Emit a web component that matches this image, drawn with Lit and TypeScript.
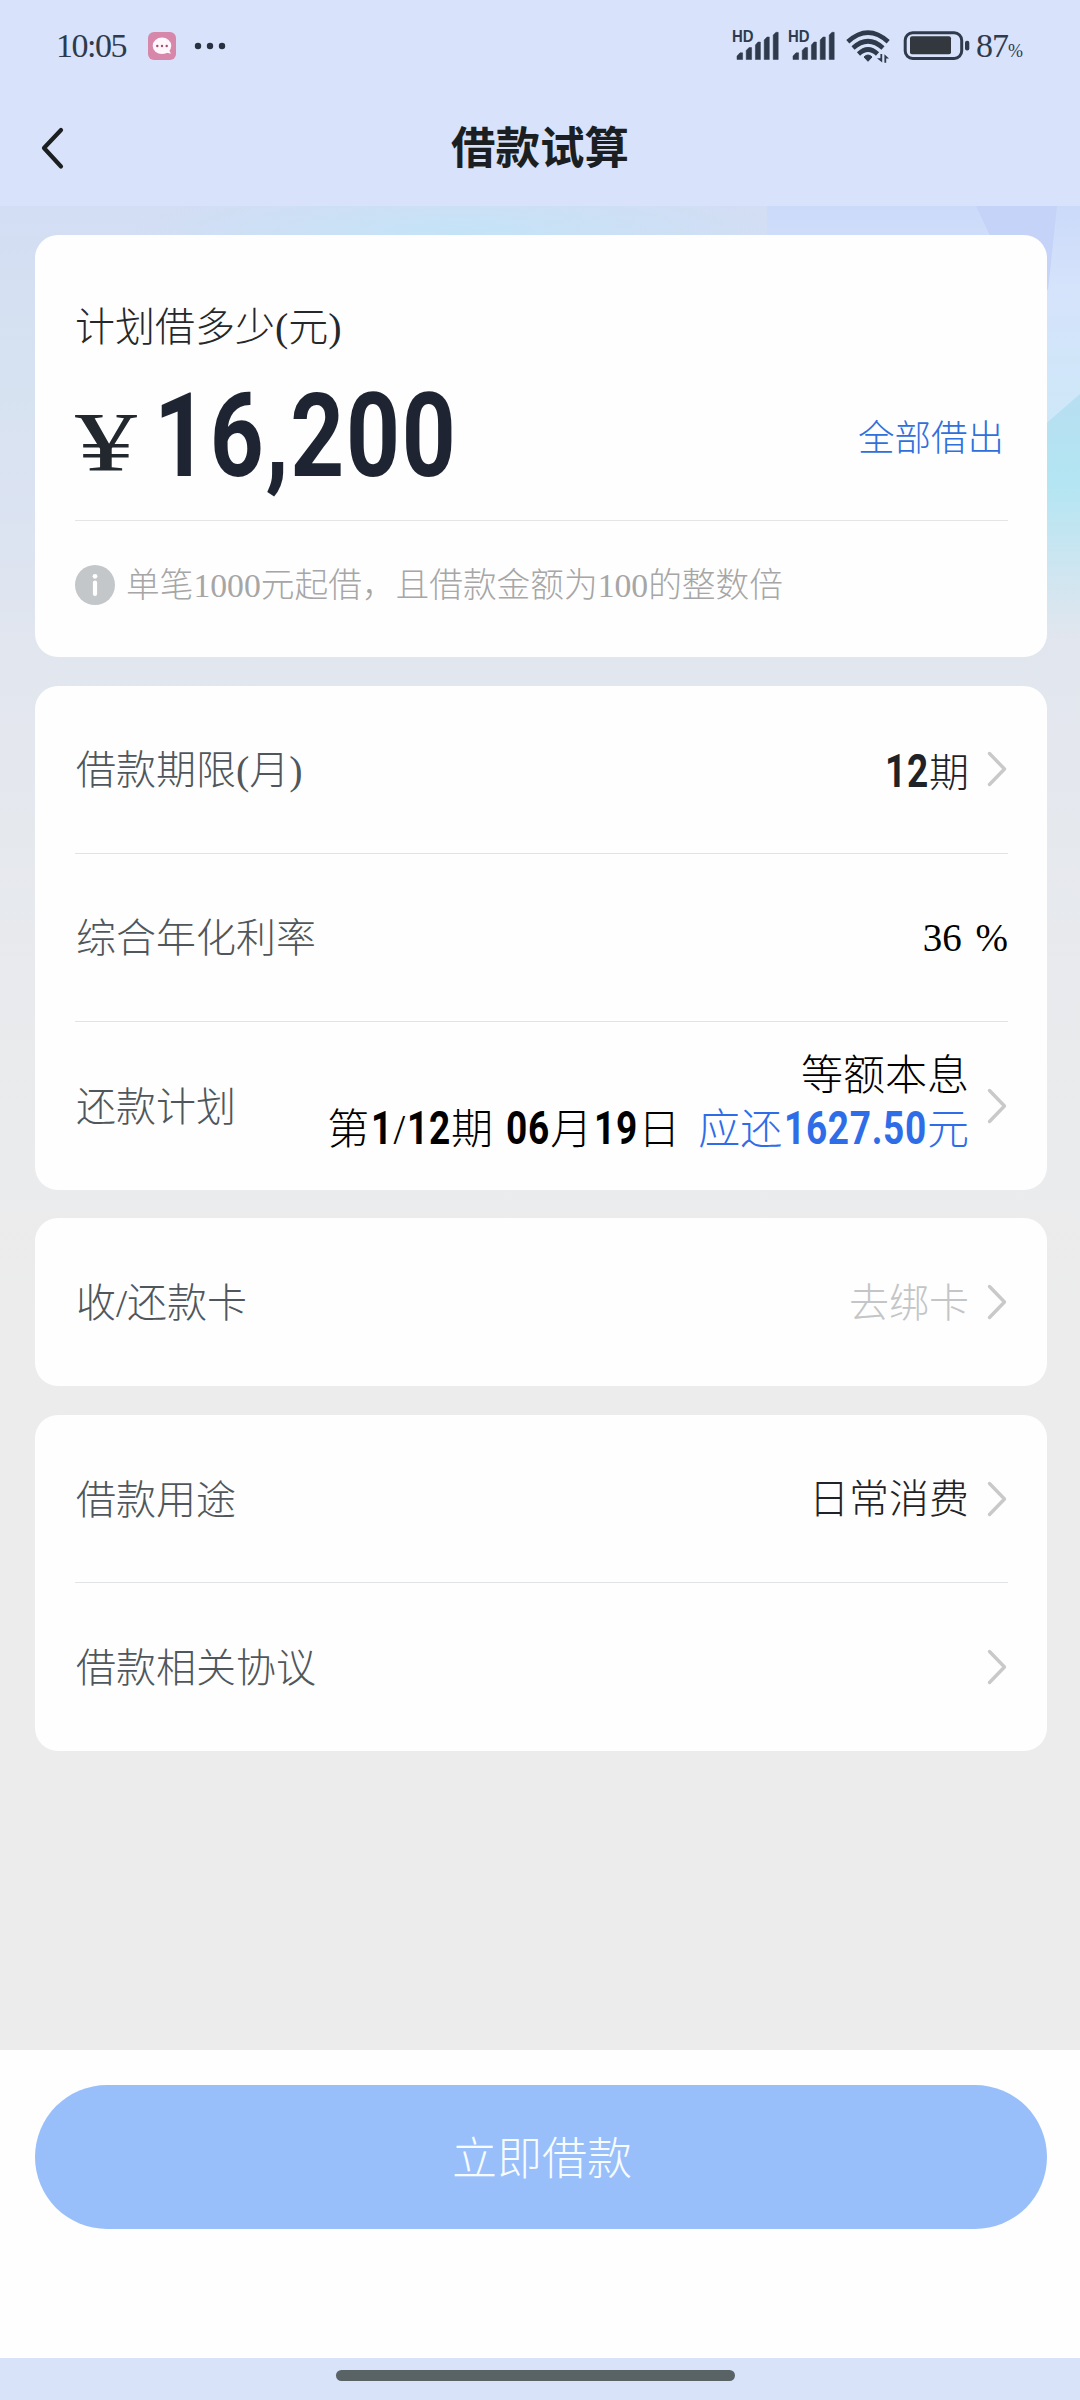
import { LitElement, html, svg, css } from "lit";
import { customElement, property } from "lit/decorators.js";
import { styleMap } from "lit/directives/style-map.js";

const DIGIT_ADVANCE = 0.479;
const MARK_ADVANCE = 0.228;

/** Condensed bold figures used for amounts, dates and term counts. */
@customElement("din-number")
class DinNumber extends LitElement {
  @property() value = "";
  @property({ type: Number }) size = 46;

  static styles = css`
    :host { display: inline-block; line-height: 1; }
    .cell { display: inline-block; white-space: nowrap; padding-left: 2px; }
    .digits {
      display: inline-block; font-family: Roboto, "Liberation Sans", sans-serif; font-weight: 700;
      line-height: 1; letter-spacing: 0.018em; transform: scaleX(0.805); transform-origin: 0 50%;
    }
  `;

  render() {
    const ems = [...this.value].reduce(
      (sum, ch) => sum + (/\d/.test(ch) ? DIGIT_ADVANCE : MARK_ADVANCE), 0);
    const cell = styleMap({ width: `${ems * this.size}px` });
    const digits = styleMap({ fontSize: `${this.size}px` });
    return html`<span class="cell" style=${cell}><span class="digits" style=${digits}>${this.value}</span></span>`;
  }
}

/** One label/value line inside a card. */
@customElement("loan-row")
class LoanRow extends LitElement {
  @property() label = "";
  @property({ type: Boolean }) link = false;

  static styles = css`
    :host { display: block; height: 168px; box-sizing: border-box; }
    .row { height: 100%; display: flex; align-items: center; justify-content: space-between; }
    .label { color: #50575c; white-space: nowrap; padding: 4px 0 0 1px; }
    .side { display: flex; align-items: center; gap: 18px; }
    .chevron { display: block; margin-right: 1px; }
  `;

  render() {
    return html`<div class="row">
      <span class="label">${this.label}</span>
      <div class="side">
        <slot></slot>
        ${this.link
          ? html`<svg class="chevron" width="20" height="36" viewBox="0 0 20 36">
              <path d="M2.5 2.5 L17.5 18 L2.5 33.5" fill="none" stroke="#c9c9c9"
                stroke-width="3.4" stroke-linecap="round" stroke-linejoin="round" /></svg>`
          : null}
      </div>
    </div>`;
  }
}

@customElement("app-root")
class AppRoot extends LitElement {
  static styles = css`
    :host {
      display: block; width: 1080px; height: 2400px; overflow: hidden;
      font-family: "Liberation Serif", "Noto Sans CJK SC", serif;
      font-weight: 300; font-size: 40px; line-height: 1; color: #1f2226;
    }
    .screen { height: 100%; display: flex; flex-direction: column; background: #ececec; }
    .top { height: 206px; flex: none; background: #d8e2fa; display: flex; flex-direction: column; }
    .status {
      height: 92px; box-sizing: border-box; padding: 0 57px 0 56px; display: flex;
      align-items: center; color: #2f3a4c; font-size: 34px;
    }
    .time { letter-spacing: -1.5px; width: 92px; }
    .spacer { flex: 1; }
    .status-icons { display: block; }
    .hd { font: 700 16px "Liberation Sans", sans-serif; fill: #2f3a4c; }
    .charge { display: flex; align-items: baseline; width: 47px; margin-left: 6px; letter-spacing: -1px; white-space: nowrap; }
    .percent { font-size: 18px; letter-spacing: 0; }
    .nav { height: 114px; display: grid; grid-template-columns: 140px 1fr 140px; align-items: center; padding-bottom: 2px; box-sizing: border-box; }
    .back { display: block; margin-left: 39px; }
    .title { margin: 0; padding-top: 3px; text-align: center; font-size: 44.5px; font-weight: 700; color: #1b1f22; line-height: 1; }

    .body { flex: 1; position: relative; }
    .backdrop { position: absolute; left: 0; top: 0; display: block; }
    .cards { position: relative; padding: 29px 33px 0 35px; display: flex; flex-direction: column; gap: 28.7px; }
    .card { background: #fefefe; border-radius: 23px; padding: 0 39px 0 40px; }

    .amount-card { height: 422px; box-sizing: border-box; display: flex; flex-direction: column; }
    .question { padding-top: 73px; line-height: 40px; color: #25282b; }
    .amount-line { height: 173px; box-sizing: border-box; display: flex; align-items: flex-end; padding-bottom: 43px; border-bottom: 1.5px solid #e4e5e7; }
    .yen { display: block; overflow: visible; margin-bottom: 6px; }
    .yen-text { font-family: "Liberation Serif", serif; font-weight: 400; fill: #22282d; }
    .total { display: flex; margin: 0 0 -18px 15px; color: #1e2432; }
    .borrow-all { margin: 0 4px 18px auto; color: #3070dc; font-size: 36.5px; line-height: 40px; }
    .notice { flex: 1; display: flex; align-items: center; gap: 11px; padding-bottom: 9px; color: #a6a6a6; font-size: 33.7px; white-space: nowrap; }
    .notice-text { padding-top: 3px; }
    .info { display: block; }

    .ruled { border-bottom: 1px solid #e2e3e4; }
    .ink { color: #000; font-size: 39px; word-spacing: 4px; }
    .muted { color: #c3c5c6; padding-top: 3px; }
    .plan { display: flex; flex-direction: column; align-items: flex-end; gap: 8px; padding-bottom: 6px; color: #000; white-space: nowrap; font-size: 42px; }
    .method { line-height: 42px; }
    .due-line { display: flex; align-items: baseline; line-height: 42px; }
    .due { margin-left: 18px; color: #2f6de8; }
    .date { margin-left: 11px; }
    .side-text { white-space: nowrap; padding-top: 3px; }

    .footer { height: 308px; flex: none; box-sizing: border-box; background: #fefefe; padding: 35px 33px 0 35px; }
    .submit {
      width: 100%; height: 144px; border: 0; border-radius: 72px; background: #99bffb; box-sizing: border-box;
      color: #f6fcff; font: inherit; font-size: 45px; display: flex; align-items: center; justify-content: center; padding: 6px 0 0 2px;
    }
    .home { height: 42px; flex: none; background: #d8e2f8; display: flex; justify-content: center; align-items: flex-start; padding: 12px 9px 0 0; box-sizing: border-box; }
    .home-bar { width: 399px; height: 11px; border-radius: 6px; background: #596264; }
  `;

  private signal(x: number) {
    return svg`<g transform="translate(${x} 0)">
      <text class="hd" x="0" y="42" textLength="21.5" lengthAdjust="spacingAndGlyphs">HD</text>
      <path d="M5 59.5V56L8 52.8H10.6V59.5Z M14.2 59.5V50.5L17 47.6H19.6V59.5Z M23.4 59.5V45L26 42H28.4V59.5Z
        M32.2 59.5V40L35 37H37.3V59.5Z M41.2 59.5V35L44 32.3H46.2V59.5Z"
        fill="#2f3a4c" stroke="#2f3a4c" stroke-width=".5" stroke-linejoin="round" />
    </g>`;
  }

  private statusBar() {
    return html`<div class="status">
      <span class="time">10:05</span>
      <svg class="status-icons" width="82" height="92" viewBox="148 0 82 92">
        <rect x="148" y="32" width="28" height="28" rx="6" fill="#d687aa" />
        <ellipse cx="162" cy="45.8" rx="9.3" ry="8.3" fill="#fff7fb" />
        <path d="M164 52 L171 53.8 L168.5 49Z" fill="#fff7fb" />
        <g fill="#a0506f"><circle cx="157.3" cy="46" r="1.2" /><circle cx="162" cy="46" r="1.2" /><circle cx="166.7" cy="46" r="1.2" /></g>
        <g fill="#28313f"><circle cx="198" cy="46" r="3.2" /><circle cx="210" cy="46" r="3.2" /><circle cx="222" cy="46" r="3.2" /></g>
      </svg>
      <span class="spacer"></span>
      <svg class="status-icons" width="238" height="92" viewBox="732 0 238 92">
        ${this.signal(732)}
        ${this.signal(788)}
        <g fill="none" stroke="#2f3a4c" stroke-width="4.6">
          <path d="M847.8 41.8 Q868 23.5 888.2 41.8" />
          <path d="M853 48 Q868 34.5 883 48" />
          <path d="M858.5 54 Q868 45 877.5 54" />
        </g>
        <path d="M864 57 Q868 53 872 57 L868 61.3Z" fill="#2f3a4c" stroke="#2f3a4c" stroke-linejoin="round" />
        <path d="M882.2 54 V62.5 L877 58.3H880.4V54Z M884.4 62.8 V54.2 L889 58.5H886.2V62.8Z" fill="#2f3a4c" />
        <rect x="905.2" y="32.8" width="56.5" height="25.6" rx="7.5" fill="none" stroke="#2f3a4c" stroke-width="3" />
        <rect x="910" y="36.3" width="41" height="18" rx="2" fill="#33383f" />
        <rect x="965" y="40.8" width="4.3" height="9.8" rx="2" fill="#2f3a4c" />
      </svg>
      <span class="charge">87<span class="percent">%</span></span>
    </div>`;
  }

  private backdrop() {
    return html`<svg class="backdrop" width="1080" height="1100" viewBox="0 206 1080 1100">
      <defs>
        <linearGradient id="base" x1="0" y1="0" x2="0" y2="1">
          <stop offset="0" stop-color="#d3ddf4" /><stop offset=".14" stop-color="#d6e2f1" />
          <stop offset=".28" stop-color="#dbe3f2" /><stop offset=".42" stop-color="#e2e6ee" />
          <stop offset=".7" stop-color="#e8eaed" /><stop offset="1" stop-color="#ececec" />
        </linearGradient>
        <radialGradient id="glow"><stop offset="0" stop-color="#c4e3f7" /><stop offset="1" stop-color="#c4e3f7" stop-opacity="0" /></radialGradient>
        <linearGradient id="right" x1="0" y1="0" x2="0" y2="1">
          <stop offset="0" stop-color="#cbdaf9" /><stop offset=".35" stop-color="#d5e3fb" />
          <stop offset="1" stop-color="#cde8f8" />
        </linearGradient>
        <linearGradient id="aqua" x1="0" y1="0" x2="0" y2="1">
          <stop offset="0" stop-color="#b7dff1" /><stop offset=".35" stop-color="#b3e5f3" />
          <stop offset="1" stop-color="#e2e6ee" />
        </linearGradient>
      </defs>
      <rect x="0" y="206" width="1080" height="1100" fill="url(#base)" />
      <ellipse cx="460" cy="232" rx="330" ry="50" fill="url(#glow)" />
      <rect x="767" y="206" width="313" height="234" fill="url(#right)" />
      <path d="M976 206 H1057 L1048 290 L992 240Z" fill="#c5d3f8" />
      <path d="M1020 446 L1080 394 V640 H1020Z" fill="url(#aqua)" />
    </svg>`;
  }

  render() {
    return html`<div class="screen">
      <header class="top">
        ${this.statusBar()}
        <div class="nav">
          <svg class="back" width="26" height="44" viewBox="39 127 26 44">
            <path d="M61 131 L44 149 L61 167.5" fill="none" stroke="#1b1f22" stroke-width="4.2" stroke-linecap="round" stroke-linejoin="round" />
          </svg>
          <h1 class="title">借款试算</h1>
        </div>
      </header>
      <main class="body">
        ${this.backdrop()}
        <div class="cards">
          <section class="card amount-card">
            <div class="question">计划借多少(元)</div>
            <div class="amount-line">
              <svg class="yen" width="62" height="56">
                <text class="yen-text" x="0" y="56" font-size="85" textLength="62" lengthAdjust="spacingAndGlyphs">¥</text>
              </svg>
              <span class="total"><din-number value="16,200" .size=${117}></din-number></span>
              <span class="borrow-all">全部借出</span>
            </div>
            <div class="notice">
              <svg class="info" width="40" height="40" viewBox="0 0 40 40">
                <circle cx="20" cy="20" r="20" fill="#c3c7ca" />
                <circle cx="20" cy="11.3" r="2.4" fill="#fff" />
                <path d="M20 17.5V29" stroke="#fff" stroke-width="4.2" stroke-linecap="round" />
              </svg>
              <span class="notice-text">单笔1000元起借，且借款金额为100的整数倍</span>
            </div>
          </section>

          <section class="card">
            <loan-row class="ruled" label="借款期限(月)" link>
              <span class="side-text"><din-number value="12"></din-number>期</span>
            </loan-row>
            <loan-row class="ruled" label="综合年化利率"><span class="ink">36 %</span></loan-row>
            <loan-row label="还款计划" link>
              <div class="plan">
                <span class="method">等额本息</span>
                <div class="due-line">
                  <span>第<din-number value="1"></din-number>/<din-number value="12"></din-number>期</span>
                  <span class="date"><din-number value="06"></din-number>月<din-number value="19"></din-number>日</span>
                  <span class="due">应还<din-number value="1627.50"></din-number>元</span>
                </div>
              </div>
            </loan-row>
          </section>

          <section class="card">
            <loan-row label="收/还款卡" link><span class="muted">去绑卡</span></loan-row>
          </section>

          <section class="card">
            <loan-row class="ruled" label="借款用途" link><span class="side-text">日常消费</span></loan-row>
            <loan-row label="借款相关协议" link></loan-row>
          </section>
        </div>
      </main>
      <footer class="footer"><button class="submit">立即借款</button></footer>
      <div class="home"><div class="home-bar"></div></div>
    </div>`;
  }
}
